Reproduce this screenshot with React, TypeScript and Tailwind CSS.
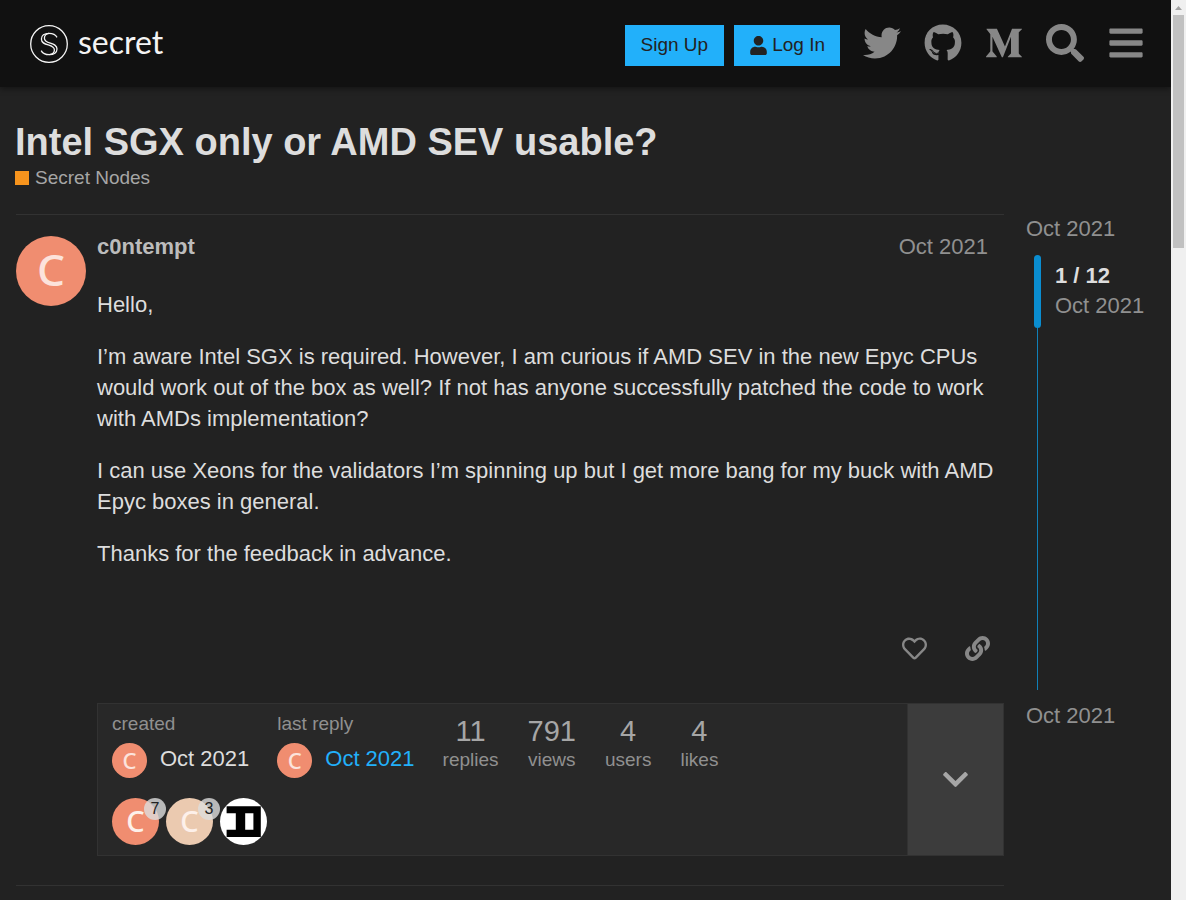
import type { ReactNode } from "react";
import {
  FaBars,
  FaChevronDown,
  FaGithub,
  FaLink,
  FaMediumM,
  FaRegHeart,
  FaSearch,
  FaTwitter,
  FaUser,
} from "react-icons/fa";

function SecretLogo() {
  return (
    <a href="#home" aria-label="secret" className="flex items-center gap-2.5 pt-0.5 text-[#f4f4f4]">
      <svg viewBox="0 0 38 38" className="size-[38px] shrink-0" fill="none" stroke="currentColor" strokeWidth="1.3">
        <circle cx="19" cy="19" r="18.3" />
        <path d="M27 12.4C25.6 9.600 22.8 8.300 19 8.300C14.4 8.300 11.400 10.600 11.400 14C11.400 21.6 24.4 18.400 24.4 25C24.4 27.400 22.6 29.200 19.400 29.700" />
        <path d="M11.200 25.600C12.600 28.400 15.400 29.700 19.400 29.700C24 29.700 27 27.400 27 24C27 16.400 14.400 19.800 14.400 13.200C14.400 10.600 16.200 8.700 19 8.300" />
      </svg>
      <span className="pb-1 font-['Lato',sans-serif] text-[32px] leading-8">secret</span>
    </a>
  );
}

function HeaderLink({ label, children }: { label: string; children: ReactNode }) {
  return (
    <a href={`#${label}`} aria-label={label} className="flex w-[61px] justify-center">
      {children}
    </a>
  );
}

function Header() {
  return (
    <header className="flex h-[87px] items-center justify-between bg-[#111] pb-0.5 pl-[30px] pr-[15px] shadow-[0_2px_6px_rgba(0,0,0,0.4)]">
      <SecretLogo />
      <div className="flex items-center">
        <div className="mr-[11px] mt-1.5 flex gap-2.5 text-[19px] text-[#222]">
          <button type="button" className="h-[41px] bg-[#22b0fa] px-4">
            Sign Up
          </button>
          <button type="button" className="flex h-[41px] items-center gap-1 bg-[#22b0fa] px-[15px]">
            <FaUser className="size-[19px]" />
            Log In
          </button>
        </div>
        <nav className="flex items-center text-[#878787]">
          <HeaderLink label="twitter">
            <FaTwitter className="size-[38px]" />
          </HeaderLink>
          <HeaderLink label="github">
            <FaGithub className="size-[38px]" />
          </HeaderLink>
          <HeaderLink label="medium">
            <FaMediumM className="size-[38px]" />
          </HeaderLink>
          <button type="button" aria-label="Search" className="flex w-[61px] justify-center">
            <FaSearch className="size-[38px]" />
          </button>
          <button type="button" aria-label="Menu" className="flex w-[61px] justify-center">
            <FaBars className="size-[38px]" />
          </button>
        </nav>
      </div>
    </header>
  );
}

function PostAvatar() {
  return (
    <a
      href="#c0ntempt"
      className="mt-px flex size-[70px] shrink-0 items-center justify-center rounded-full bg-[#f08d70] pb-1 font-['Noto_Sans',sans-serif] text-[44px] font-medium leading-none text-[#fce3dc]"
    >
      C
    </a>
  );
}

function SmallAvatar() {
  return (
    <span className="flex size-[35px] items-center justify-center rounded-full bg-[#f08d70] pb-0.5 font-['Noto_Sans',sans-serif] text-[22px] font-medium leading-none text-[#fce3dc]">
      C
    </span>
  );
}

function PosterAvatar({ color, count }: { color: string; count: number }) {
  return (
    <a
      href="#poster"
      className={`relative flex size-[47px] items-center justify-center rounded-full pb-0.5 font-['Noto_Sans',sans-serif] text-[29px] font-medium leading-none text-[#fdf0ea] ${color}`}
    >
      C
      <span className="absolute -right-[7px] top-0 flex size-[22px] items-center justify-center rounded-full bg-[#dddddd]/80 font-['Liberation_Sans',sans-serif] text-base font-normal leading-none text-[#222]">
        {count}
      </span>
    </a>
  );
}

function GlyphAvatar() {
  return (
    <a href="#poster" aria-label="poster" className="size-[47px] overflow-hidden rounded-full bg-white">
      <svg viewBox="0 0 47 47" className="size-full">
        <path fill="#000" fillRule="evenodd" d="M6.6 8.300H40.8V39H6.6V31.8H15.8V15.200H6.6ZM25.2 15.200V31.8H33.4V15.200Z" />
      </svg>
    </a>
  );
}

function Stat({ value, label }: { value: string; label: string }) {
  return (
    <li className="flex flex-col items-center">
      <span className="text-[29px] leading-[30px] text-[#a6a6a6]">{value}</span>
      <span className="mt-0.5 text-[19px] leading-6 text-[#909090]">{label}</span>
    </li>
  );
}

function TopicMap() {
  return (
    <section className="flex border border-[#323232] bg-[#282828]">
      <div className="flex-1 pb-2.5 pl-3.5 pt-2">
        <ul className="flex gap-7">
          <li>
            <h4 className="text-[19px] leading-6 text-[#909090]">created</h4>
            <div className="mt-[7px] flex gap-[13px] leading-8">
              <SmallAvatar />
              <span className="text-[#ddd]">Oct 2021</span>
            </div>
          </li>
          <li>
            <a href="#last" className="block">
              <h4 className="text-[19px] leading-6 text-[#909090]">last reply</h4>
              <div className="mt-[7px] flex gap-[13px] leading-8">
                <SmallAvatar />
                <span className="text-[#22b0fa]">Oct 2021</span>
              </div>
            </a>
          </li>
          <li>
            <ul className="flex gap-[29px] pt-1">
              <Stat value="11" label="replies" />
              <Stat value="791" label="views" />
              <Stat value="4" label="users" />
              <Stat value="4" label="likes" />
            </ul>
          </li>
        </ul>
        <div className="mt-5 flex gap-[7px]">
          <PosterAvatar color="bg-[#f08d70]" count={7} />
          <PosterAvatar color="bg-[#ebcab0]" count={3} />
          <GlyphAvatar />
        </div>
      </div>
      <button
        type="button"
        aria-label="Expand topic details"
        className="flex w-24 items-center justify-center border-l border-[#323232] bg-[#3c3c3c] text-[#a6a6a6]"
      >
        <FaChevronDown className="size-[29px]" />
      </button>
    </section>
  );
}

function Post() {
  return (
    <article className="flex gap-[11px] border-y border-[#323232] pb-[29px] pt-5">
      <PostAvatar />
      <div className="min-w-0 flex-1">
        <div className="flex justify-between pr-4 leading-6">
          <a href="#c0ntempt" className="font-bold text-[#bcbcbc]">
            c0ntempt
          </a>
          <a href="#date" className="text-[#909090]">
            Oct 2021
          </a>
        </div>
        <div className="space-y-[21px] pt-[30px] leading-[31px] text-[#ddd]">
          <p>Hello,</p>
          <p>
            I’m aware Intel SGX is required. However, I am curious if AMD SEV in the new Epyc CPUs would work out of
            the box as well? If not has anyone successfully patched the code to work with AMDs implementation?
          </p>
          <p>
            I can use Xeons for the validators I’m spinning up but I get more bang for my buck with AMD Epyc boxes in
            general.
          </p>
          <p>Thanks for the feedback in advance.</p>
        </div>
        <div className="mb-[42px] mt-[67px] flex justify-end gap-[38px] pr-3.5 text-[#878787]">
          <button type="button" aria-label="Like">
            <FaRegHeart className="size-[25px]" />
          </button>
          <button type="button" aria-label="Share link">
            <FaLink className="size-[25px]" />
          </button>
        </div>
        <TopicMap />
      </div>
    </article>
  );
}

function Timeline() {
  return (
    <aside className="w-[145px] shrink-0 leading-[30px] text-[#909090]">
      <a href="#first" className="block">
        Oct 2021
      </a>
      <div className="my-[11px] flex h-[435px] gap-3.5 pl-2">
        <div className="flex w-[7px] flex-col items-center">
          <div className="h-[73px] w-[7px] rounded-full bg-[#0a8dd0]" />
          <div className="w-px flex-1 bg-[#1080b8]" />
        </div>
        <div className="pt-1.5">
          <div className="font-bold text-[#ddd]">1 / 12</div>
          <div>Oct 2021</div>
        </div>
      </div>
      <a href="#latest" className="block">
        Oct 2021
      </a>
    </aside>
  );
}

function Scrollbar() {
  return (
    <div aria-hidden="true" className="flex w-[15px] shrink-0 flex-col items-center bg-[#f0f0f0]">
      <svg viewBox="0 0 15 15" className="size-[15px]">
        <path d="M4 10L7.500 6L11 10Z" fill="#a3a3a3" />
      </svg>
      <div className="h-[233px] w-[11px] bg-[#c1c1c1]" />
    </div>
  );
}

export default function App() {
  return (
    <div className="flex min-h-screen bg-[#222] font-['Liberation_Sans',Arial,sans-serif] text-[22px]">
      <div className="flex min-w-0 flex-1 flex-col">
        <Header />
        <main className="flex-1 pl-[15px] pt-8">
          <h1 className="text-[38px] font-bold leading-[46px] text-[#ddd]">Intel SGX only or AMD SEV usable?</h1>
          <a href="#secret-nodes" className="flex items-center gap-1.5 text-[19px] leading-[25px] text-[#a6a6a6]">
            <span className="size-3.5 bg-[#f7941d]" />
            Secret Nodes
          </a>
          <div className="mt-6 flex gap-[22px] pl-px">
            <div className="min-w-0 flex-1">
              <Post />
            </div>
            <Timeline />
          </div>
        </main>
      </div>
      <Scrollbar />
    </div>
  );
}
